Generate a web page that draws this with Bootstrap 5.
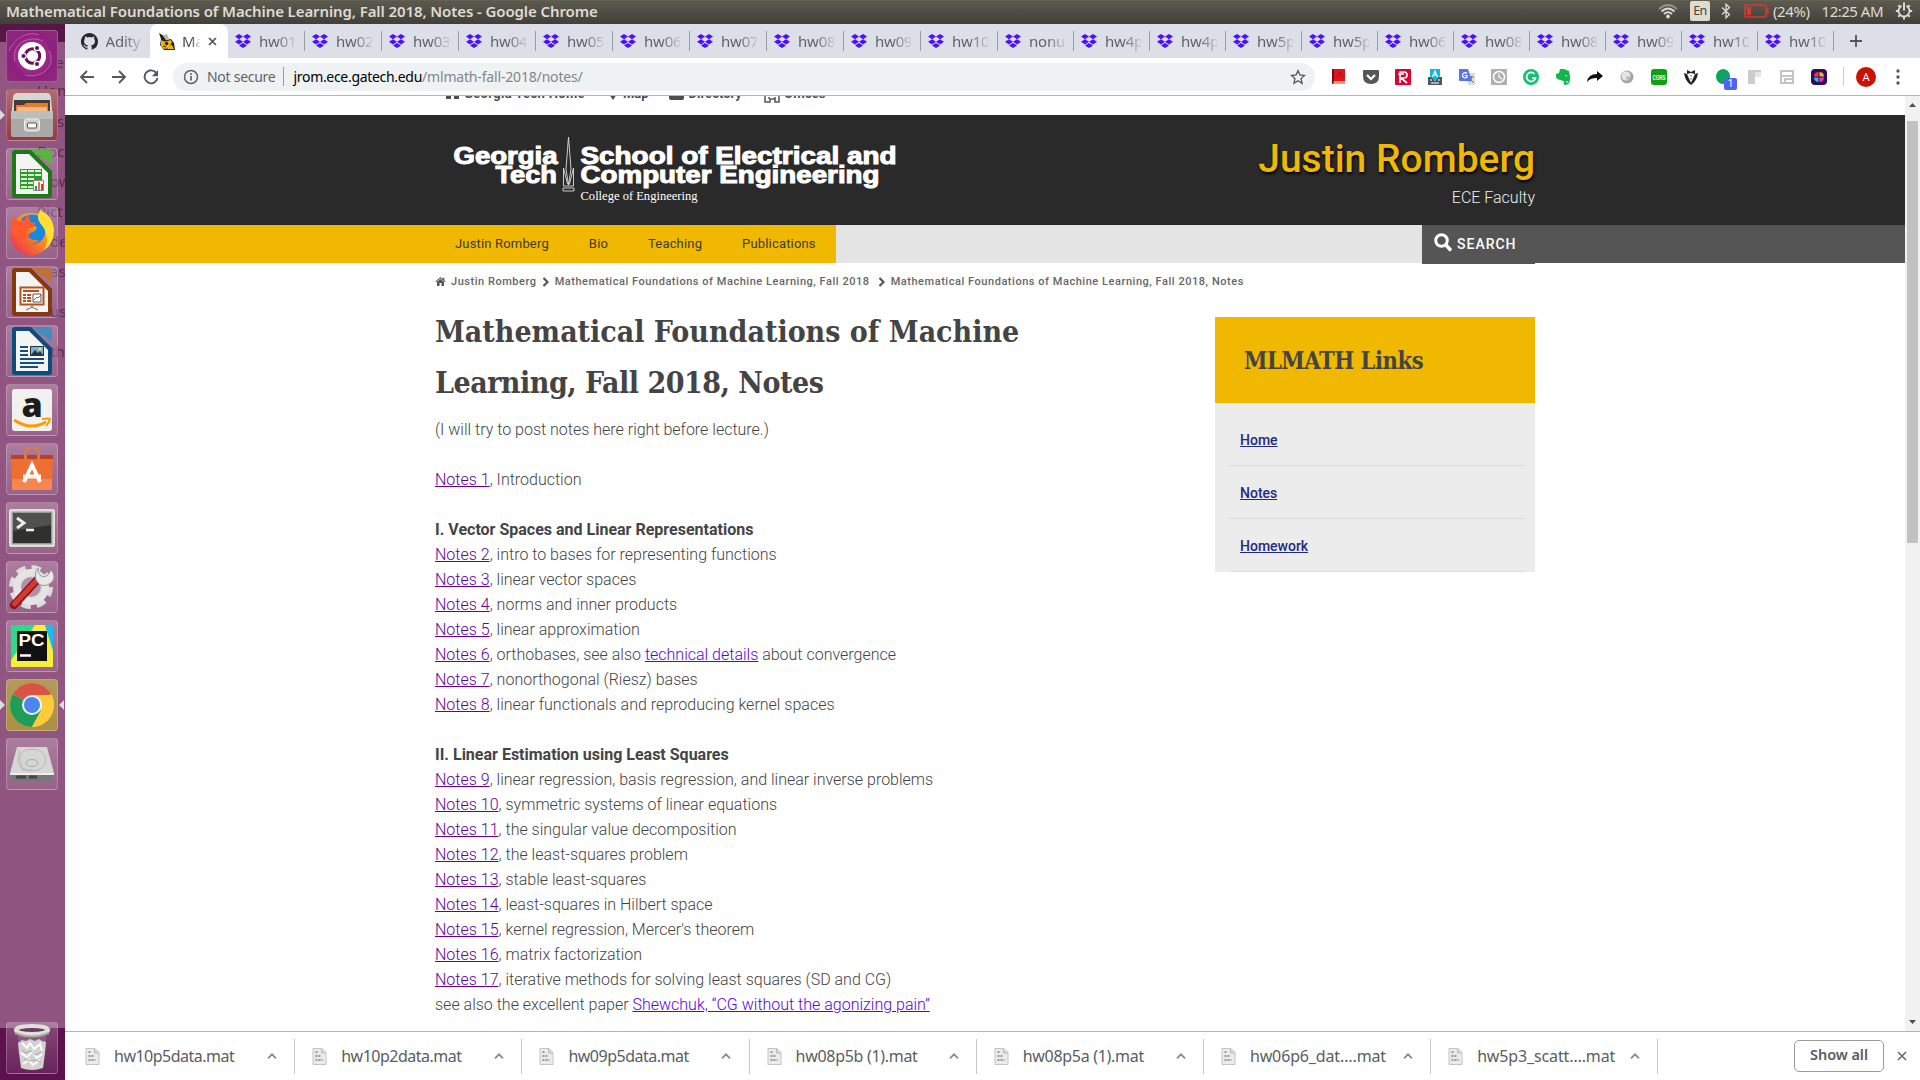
<!DOCTYPE html>
<html lang="en">
<head>
<meta charset="utf-8">
<title>Mathematical Foundations of Machine Learning, Fall 2018, Notes</title>
<link rel="stylesheet" href="https://cdn.jsdelivr.net/npm/bootstrap@5.3.0/dist/css/bootstrap.min.css">
<style>
:root{--gold:#f0b800;--ui:"Noto Sans","Open Sans",sans-serif;--slab:"DejaVu Serif Condensed","DejaVu Serif",serif}
body{width:1920px;height:1080px;overflow:hidden;font-family:Roboto,sans-serif;background:#fff}
svg{display:block;flex:none}
.desk-bar{height:24px;background:linear-gradient(#5c5a50,#403f39);color:#dfdbd2;font:15px/20px var(--ui);padding:0 7px 3px 6px;border-top:1px solid #63614f}
.desk-title{font-weight:600;font-size:15px;letter-spacing:-.1px;white-space:nowrap}
.en-box{width:20px;height:20px;background:#dfdbd2;color:#45443d;border-radius:2px;font-size:12.5px;letter-spacing:-.6px;line-height:20px;text-align:center}
.dock{width:65px;background:linear-gradient(#561747 0 18px,#915581 18px 1004px,#5d114e 1004px);padding:6px 7px 6px 6px;position:relative;overflow:hidden}
.dock-tile{width:52px;height:52px;border-radius:4px;background:linear-gradient(rgba(255,255,255,.24),rgba(255,255,255,.08));border:1px solid rgba(255,255,255,.22);margin-bottom:7px;position:relative;display:flex;align-items:center;justify-content:center}
.dock-tile.is-dash{background:radial-gradient(circle,#b04a9a,#8f1f7e 60%,#8c2a7b)}
.dock-tile.is-files{background:linear-gradient(#b06a72,#923b46)}
.dock-tile.is-chrome{background:linear-gradient(#b39a5c,#ac8f45)}
.ghost{position:absolute;font:15px/20px var(--ui);color:#5d2b52}
.pip{position:absolute;top:20px;width:0;height:0;border:5px solid transparent}
.pip-l{left:-7px;border-left-color:#ddd;border-right:0}
.pip-r{right:-7px;border-right-color:#ddd;border-left:0}
.tabs{height:34px;background:#dcdfe7;font:15px/34px var(--ui);color:#606368}
.tab{width:77px;padding-left:6.5px;position:relative;display:flex;align-items:center}
.tab.slim{width:76px}
.tab::after{content:"";position:absolute;right:0;top:7px;height:20px;width:1px;background:#9a9da3}
.tab.first::after,.tab.on::after{display:none}
.tab.first{width:85px;padding-left:16px}
.tab.on{width:78px;background:#fff;border-radius:8px 8px 0 0;padding-left:9px;color:#45484c}
.tab-t{margin-left:8.5px;width:36px;overflow:hidden;white-space:nowrap;letter-spacing:-.2px;-webkit-mask:linear-gradient(90deg,#000 50%,rgba(0,0,0,.15));mask:linear-gradient(90deg,#000 50%,rgba(0,0,0,.15))}
.tab.first .tab-t{margin-left:7.5px}
.tab.on .tab-t{width:18px;margin-left:7px}
.toolbar{height:38px;border-bottom:1px solid #b3b5b6;padding-left:14px;background:#fff}
.omni{margin-left:14px;width:1142px;height:28px;border-radius:14px;background:#eef2f3;padding:0 9px 0 10px;font:14px/28px var(--ui);color:#5f6368}
.url-host{letter-spacing:-.31px;color:#000}
.url-path{letter-spacing:-.17px;color:#80868b}
.ext{width:32px;height:24px;display:flex;align-items:center;justify-content:center}
.viewport{height:935px;overflow:hidden}
.page{width:1840px}
.inner{width:1100px;margin:0 auto}
.topline{height:19px;overflow:hidden;color:#4d4d4d;font:700 13px/16px Roboto,sans-serif}
.topline .inner{margin-top:-10px;padding-left:11px}
.brandbar{height:110px;background:#2a2a2a}
.who{font-weight:500;font-size:39px;line-height:46px;color:var(--gold);text-shadow:1px 2px 3px #000;margin-top:21px}
.sub{font-weight:300;font-size:16px;line-height:20px;color:#eee;margin-top:6px}
.menubar{height:38px;background:linear-gradient(90deg,var(--gold) 0 771px,#e4e4e4 771px 1357px,#555 1357px)}
.menubar a{color:#3d3a33;font-size:13px;letter-spacing:.17px;line-height:38px;padding:0 20px;text-decoration:none}
.find{width:113px;height:39px;background:#555;color:#fff;font:500 14px/38px Roboto;letter-spacing:1px}
.crumbs{height:54px;padding-top:10px;font:500 11px/18px Roboto;letter-spacing:.54px;color:#666}
h1{font:700 30px/51px var(--slab);color:#444;margin:-11px 0 9px;white-space:nowrap}
.h-one{letter-spacing:-.01px}
.h-two{letter-spacing:-.5px}
.notes{font-weight:300;font-size:16px;line-height:25px;color:#444;white-space:nowrap}
.notes b{font-weight:700}
.notes a{color:#660099;text-decoration:underline}
.notes a.fresh{color:#5a00e6}
.side{width:320px}
.side-head{height:86px;background:var(--gold);padding:1px 29px 0;font:700 23.5px/86px var(--slab);color:#444;letter-spacing:-.47px}
.side-body{background:#ececec;height:169px;padding:10px 10px 0 15px}
.side-body a{display:block;height:53px;padding:17px 10px 0;border-bottom:1px solid #dcdcdc;font:500 14px/20px Roboto;color:#242a80;text-decoration:underline}
.sbar{width:15px;background:#f1f1f1}
.thumb{width:11px;height:422px;background:#c1c1c1}
.shelf{height:49px;border-top:1px solid #b3b5b6;padding-left:3px;background:#fff;font:16px/48px var(--ui);color:#5a5d62}
.dl{width:227.2px;padding-left:17px;height:35px;line-height:35px;border-right:1px solid #c8c8c8;letter-spacing:-.5px}
.dl.paren{letter-spacing:-.3px}
.dl.cut{letter-spacing:-.14px}
.dl .nm{width:153px;margin-left:14px;padding-top:1px;white-space:nowrap}
.all{width:90px;height:32px;border:1px solid #9a9a9a;border-radius:5px;font:600 14.5px/27px var(--ui);text-align:center;letter-spacing:-.05px}
</style>
<script src="https://cdn.jsdelivr.net/npm/bootstrap@5.3.0/dist/js/bootstrap.bundle.min.js"></script>
</head>
<body class="d-flex flex-column">
<svg width="0" height="0" class="position-absolute">
<symbol id="dbx" viewBox="0 0 16 14"><path fill="#4a10ff" d="M4 0l4 2.6-4 2.6L0 2.6zM12 0l4 2.6-4 2.6-4-2.6zM4 5.2l4 2.6-4 2.6-4-2.6zM12 5.2l4 2.6-4 2.6-4-2.6zM8 8.9l4 2.6L8 14l-4-2.5z"/></symbol>
<symbol id="doc" viewBox="0 0 14 17"><path d="M.5.5h9l4 4v12H.5z" fill="#ebebeb" stroke="#c4c4c4"/><path d="M9 .5v4.500h4.500" fill="#d8d8d8" stroke="#bbb"/><path d="M3 4h2M3 8h2M6 8h2M3 12h2M6 12h2M9 12h1" stroke="#999" stroke-width="2"/></symbol>
<symbol id="up" viewBox="0 0 10 6"><path d="M1 5.300l4-4 4 4" fill="none" stroke="#85888c" stroke-width="1.700"/></symbol>
<symbol id="chev" viewBox="0 0 7 10"><path d="M1.500 1l4 4-4 4" fill="none" stroke="#555" stroke-width="2.200"/></symbol>
<symbol id="house" viewBox="0 0 16 14"><path d="M8 0l8 7-1 1-7-6-7 6-1-1zM11.500 1H14v4l-2.500-2zM8 3.200l5.500 4.700V14h-4V9.500h-3V14h-4V7.900z" fill="#555"/></symbol>
</svg>

<header class="desk-bar d-flex align-items-center justify-content-between">
  <span class="desk-title">Mathematical Foundations of Machine Learning, Fall 2018, Notes - Google Chrome</span>
  <div class="d-flex align-items-center">
    <svg width="20" height="16" viewBox="0 0 20 16" fill="none" stroke="#dfdbd2" stroke-width="1.800"><path d="M1 6Q10-2 19 6" opacity=".45"/><path d="M3.500 8.500Q10 2.500 16.500 8.500M6 11Q10 7.500 14 11"/><circle cx="10" cy="13.500" r="1" fill="#dfdbd2"/></svg>
    <div class="en-box" style="margin-left:12px">En</div>
    <svg style="margin-left:11px" width="10" height="16" viewBox="0 0 10 16"><path d="M1 4.500l7.500 7L5 14.800V1.200l3.500 3.300-7.500 7" fill="none" stroke="#dfdbd2" stroke-width="1.300"/></svg>
    <svg style="margin-left:13px" width="25" height="14" viewBox="0 0 25 14"><rect x="1" y="1" width="21" height="12" rx="1" fill="none" stroke="#e0352b" stroke-width="1.600"/><path d="M3 3h4v8H3zM23 4h1.500v6H23z" fill="#e0352b"/></svg>
    <span class="ms-1" style="letter-spacing:-.4px">(24%)</span>
    <span style="margin-left:12px;letter-spacing:-.5px">12:25 AM</span>
    <svg style="margin-left:12px" width="18" height="18" viewBox="0 0 18 18" fill="none" stroke="#dfdbd2"><circle cx="9" cy="9" r="5.500" stroke-width="1.800"/><path d="M9 1v8" stroke="#4c4b44" stroke-width="4.500"/><path d="M9 .5v8M3.300 3.300l2 2M14.700 3.300l-2 2M.8 9H4M17.200 9H14M3.300 14.700l2-2M14.700 14.700l-2-2M9 14v3.500" stroke-width="2"/></svg>
  </div>
</header>

<div class="d-flex flex-grow-1">
<nav class="dock d-flex flex-column flex-shrink-0">
  <span class="ghost" style="left:48px;top:28px">ce</span><span class="ghost" style="left:37px;top:56px">Hom</span>
  <span class="ghost" style="left:57px;top:87px">s</span><span class="ghost" style="left:37px;top:117px">Doc</span>
  <span class="ghost" style="left:50px;top:147px">ow</span><span class="ghost" style="left:37px;top:177px">Pict</span>
  <span class="ghost" style="left:50px;top:207px">de</span><span class="ghost" style="left:50px;top:237px">as</span>
  <span class="ghost" style="left:50px;top:277px">us</span><span class="ghost" style="left:50px;top:317px">th</span>
  <div class="dock-tile is-dash"><svg width="50" height="50" viewBox="0 0 50 50"><g fill="none" stroke="#d089c2" opacity=".6"><path d="M8 30C4 12 22 4 36 10M42 20C50 36 34 48 18 44M2 20C8 6 22 0 32 4"/></g><circle cx="25" cy="25" r="14" fill="#fff"/><circle cx="25.500" cy="25" r="7.200" fill="none" stroke="#6b1459" stroke-width="3"/><g fill="#6b1459" stroke="#fff" stroke-width="1.200"><circle cx="16.500" cy="25" r="2.700"/><circle cx="30" cy="17" r="2.700"/><circle cx="30" cy="33" r="2.700"/></g></svg></div>
  <div class="dock-tile is-files"><span class="pip pip-l"></span><svg width="44" height="46" viewBox="0 0 44 46"><path d="M3 5q1-4 4-4h30q3 0 4 4l1 13v25q0 2-2 2H4q-2 0-2-2V18z" fill="#d6d6d3"/><path d="M4 8h36v12H4z" fill="#443c36"/><path d="M6 13h8l2-2h22v10H6z" fill="#e8792a"/><path d="M7 15h30v6H7z" fill="#f3b884"/><path d="M1 19h42v24q0 2-2 2H3q-2 0-2-2z" fill="#a9a9a7"/><path d="M1 19h42v8H1z" fill="#bdbdbb"/><rect x="14.500" y="27" width="15" height="12" rx="2" fill="#cfcfcc" stroke="#eee"/><rect x="17.500" y="31" width="9" height="5" rx="1" fill="#fff" stroke="#555"/></svg></div>
  <div class="dock-tile"><svg width="42" height="48" viewBox="0 0 42 48"><path d="M4 0h16l21 21v24q0 3-3 3H4q-3 0-3-3V3q0-3 3-3z" fill="#1c7a18"/><path d="M20 0h18q3 0 3 3v12z" fill="#54b83c"/><path d="M5 4h13l19 19v21H5z" fill="#f4f4f2"/><rect x="9" y="19" width="22" height="20" fill="#2e9b28"/><path d="M10 20h6v2h-6zM17 20h6v2h-6zM24 20h6v2h-6zM10 24h6v2h-6zM17 24h6v2h-6zM24 24h6v2h-6zM10 28h6v2h-6zM17 28h6v2h-6zM10 32h6v2h-6zM17 32h6v2h-6zM10 36h6v2h-6zM17 36h6v2h-6z" fill="#d9f2d4"/><path d="M22.500 30.500h10v10h-10z" fill="#fff" stroke="#888"/><path d="M24 36h2v4h-2z" fill="#2b7cc0"/><path d="M27 32h2v8h-2z" fill="#e07a1f"/><path d="M30 34h2v6h-2z" fill="#d23c2c"/></svg></div>
  <div class="dock-tile"><svg width="46" height="46" viewBox="0 0 46 46"><defs><linearGradient id="fx" x1="1" y1="0" x2="0" y2="1"><stop offset="0" stop-color="#ffe43c"/><stop offset=".45" stop-color="#ff8a1e"/><stop offset="1" stop-color="#e8205c"/></linearGradient></defs><circle cx="22" cy="24" r="21" fill="url(#fx)"/><path d="M12 9q8-7 18-3 4 5 6 12 1 8-3 12-5 5-12 4 6 0 9-4-5 1-8-1-5-3-1-6l5-2 2-4-4-1q-4-3-3-6-4 1-5 4z" fill="#1787e0"/><path d="M2 15q1-6 4-9l3 6q3-2 7-2 0-3 4-6-1 6 2 8l5 1-3 4-5 2q-3 4 1 7l-9 6z" fill="#ff5a2e"/><path d="M31 0q13 6 14 20 0 14-10 20 5-8 2-17-2-6-6-10-4-6 0-13z" fill="#ffdf35"/></svg></div>
  <div class="dock-tile"><svg width="42" height="48" viewBox="0 0 42 48"><path d="M4 0h16l21 21v24q0 3-3 3H4q-3 0-3-3V3q0-3 3-3z" fill="#843a0e"/><path d="M20 0h18q3 0 3 3v12z" fill="#c2703a"/><path d="M5 4h13l19 19v21H5z" fill="#f4f4f2"/><rect x="9.500" y="19.500" width="23" height="17" fill="#fff" stroke="#b8501c" stroke-width="2"/><path d="M12 23h16M12 27h3M12 30h3M12 33h3M16 27h4M16 30h4M16 33h4" stroke="#c24a16" stroke-width="2"/><path d="M22 26h8v8h-8z" fill="#fff" stroke="#555"/><path d="M23 32l3-3 1 1 3-3" stroke="#3a9b2a" fill="none"/><path d="M21 37v2l-6 3M21 39l6 3" stroke="#666" fill="none"/></svg></div>
  <div class="dock-tile"><svg width="42" height="48" viewBox="0 0 42 48"><path d="M4 0h16l21 21v24q0 3-3 3H4q-3 0-3-3V3q0-3 3-3z" fill="#0d4d7c"/><path d="M20 0h18q3 0 3 3v12z" fill="#3f8fc0"/><path d="M5 4h13l19 19v21H5z" fill="#f4f4f2"/><path d="M9 20h8M9 24h8M9 28h8M9 32h24M9 36h24M9 40h18" stroke="#14507e" stroke-width="2"/><rect x="19.500" y="19.500" width="13" height="9" fill="#6fb4e2" stroke="#333"/><path d="M20 28l4-5 3 3 2-2 3 4z" fill="#333"/><circle cx="29" cy="22" r="1.500" fill="#ffe04a"/></svg></div>
  <div class="dock-tile"><svg width="42" height="44" viewBox="0 0 42 44"><rect x="1" y="1" width="40" height="42" rx="3" fill="#f1f1ef"/><text x="21" y="29" text-anchor="middle" font-family="Open Sans" font-weight="800" font-size="34" fill="#1c1c1c">a</text><path d="M3 32q17 11 32 2" fill="none" stroke="#ff9900" stroke-width="3"/><path d="M31 31q6-1 8 0-1 4-4 7" fill="none" stroke="#ff9900" stroke-width="2"/></svg></div>
  <div class="dock-tile"><svg width="44" height="44" viewBox="0 0 44 44"><path d="M1 8h42l-1 35H2z" fill="#ee6f33"/><path d="M1 8h42v4H1z" fill="#b9431b"/><path d="M2 32h40v11H2z" fill="#f58650"/><path d="M15.500 14V5q1-4 3-4h7q2 0 3 4v9" fill="none" stroke="#dd7452" stroke-width="3"/><path d="M14 35l8-17 8 17M13 29.500h18" fill="none" stroke="#fff" stroke-width="3.800"/></svg></div>
  <div class="dock-tile"><svg width="46" height="38" viewBox="0 0 46 38"><rect width="46" height="38" rx="2" fill="#deded9"/><rect x="2.500" y="2.500" width="41" height="33" fill="#999"/><rect x="4" y="4" width="38" height="30" fill="#30302e"/><path d="M4 4h38v12L4 22z" fill="#50504c"/><path d="M8 9l7 5-7 5" fill="none" stroke="#eee" stroke-width="2.800"/><path d="M17 21h8" stroke="#eee" stroke-width="2.600"/></svg></div>
  <div class="dock-tile"><svg width="46" height="46" viewBox="0 0 46 46"><circle cx="22" cy="23" r="19" fill="none" stroke="#dcdcda" stroke-width="6" stroke-dasharray="9 5.920"/><circle cx="22" cy="23" r="14" fill="#b58fa8" stroke="#e4e4e2" stroke-width="8"/><circle cx="22" cy="23" r="10" fill="none" stroke="#bbb"/><path d="M5 41L29 15" stroke="#8c1414" stroke-width="8" stroke-linecap="round"/><path d="M5.500 40L28 16" stroke="#d23a34" stroke-width="5" stroke-linecap="round"/><path d="M29 4q-1 5 3 8 4 2 7-1l3-5q6 7 0 13-5 4-11 2l-4-5q-2-8 2-12z" fill="#e8e8e6" stroke="#999"/></svg></div>
  <div class="dock-tile"><svg width="44" height="44" viewBox="0 0 44 44"><defs><linearGradient id="pc"><stop offset="0" stop-color="#2bd98a"/><stop offset="1" stop-color="#1bbce8"/></linearGradient></defs><path d="M1 1h42v42H1z" fill="url(#pc)"/><path d="M23 1h12l8 22v20H1V36z" fill="#f4f03a"/><path d="M1 1h24L1 36z" fill="#2bdb8b"/><path d="M35 1h8v26z" fill="#17c0e8"/><rect x="7" y="7" width="30" height="30" fill="#111"/><text x="8.500" y="22" font-family="Liberation Sans" font-weight="700" font-size="17" fill="#fff" textLength="26" lengthAdjust="spacingAndGlyphs">PC</text><path d="M10 31.500h11" stroke="#fff" stroke-width="2.500"/></svg></div>
  <div class="dock-tile is-chrome"><span class="pip pip-l"></span><span class="pip pip-r"></span><svg width="44" height="44" viewBox="0 0 44 44"><circle cx="22" cy="22" r="22" fill="#fc3"/><path d="M22 22L2.950 11A22 22 0 0 1 41.050 11z" fill="#da5347"/><path d="M22 22L2.950 11A22 22 0 0 0 22 44L31.500 27.500z" fill="#1f9d58"/><path d="M22 12h19.500A22 22 0 0 1 22 44l9-17z" fill="#fdcb3c"/><circle cx="22" cy="22" r="10" fill="#f5f5f5"/><circle cx="22" cy="22" r="8" fill="#4a86ec"/></svg></div>
  <div class="dock-tile"><svg width="46" height="36" viewBox="0 0 46 36"><path d="M8 1h30l7 26H1z" fill="#d6d6d4"/><path d="M1 27h44v6q0 2-2 2H3q-2 0-2-2z" fill="#777"/><path d="M1 27h44v2H1z" fill="#eee"/><path d="M7 31h10M20 31h8" stroke="#444" stroke-width="3"/><ellipse cx="23" cy="14" rx="14" ry="11" fill="none" stroke="#b5b5b3"/><ellipse cx="23" cy="17" rx="6" ry="3.500" fill="none" stroke="#aaa"/><path d="M10 4l3 20h10" fill="none" stroke="#bbb"/></svg></div>
  <div class="dock-tile mt-auto mb-0"><svg width="38" height="50" viewBox="0 0 38 50"><path d="M4 7h30l-4 37q-11 4-22 0z" fill="rgba(255,255,255,.14)"/><path d="M5 20l4-3 4 1 4-2 5 2 4-2 3 2 4 1-1 11-2 15q-11 4-22 0l-2-15z" fill="#d2d2cf"/><path d="M9 20l5 5 3-5 4 6 6-5 2 7M8 30l6 4 5-5 5 6 5-4M10 41l6-4 4 5 7-5" stroke="#fff" stroke-width="2" fill="none"/><path d="M9 27l4 3 5-2 4 4 6-3M11 36l6 2 5-1 6 2" stroke="#aaa" fill="none"/><ellipse cx="19" cy="7" rx="16" ry="4" fill="#6e3a63" stroke="#e1e1dc" stroke-width="4"/><path d="M2 10q17 7 34 0" fill="none" stroke="#a9a9a2" stroke-width="2"/></svg></div>
</nav>

<main class="flex-grow-1 d-flex flex-column">
  <div class="tabs d-flex">
    <div class="tab first"><svg width="17" height="17" viewBox="0 0 16 16"><path fill="#24292e" d="M8 0C3.580 0 0 3.580 0 8c0 3.540 2.290 6.530 5.470 7.590.4.070.55-.17.55-.38v-1.490c-2.010.37-2.530-.49-2.690-.94-.09-.23-.48-.94-.82-1.130-.28-.15-.68-.52-.01-.53.63-.01 1.080.58 1.230.82.72 1.210 1.870.87 2.330.66.07-.52.28-.87.51-1.070-1.780-.2-3.640-.89-3.640-3.950 0-.87.31-1.590.82-2.150-.08-.2-.36-1.020.08-2.120 0 0 .67-.21 2.200.82a7.600 7.600 0 0 1 4 0c1.530-1.040 2.200-.82 2.200-.82.44 1.100.16 1.920.08 2.120.51.56.82 1.270.82 2.150 0 3.070-1.870 3.750-3.650 3.950.29.25.54.73.54 1.480v2.200c0 .21.15.46.55.38A8 8 0 0 0 16 8c0-4.420-3.580-8-8-8z"/></svg><span class="tab-t">Adity</span></div>
    <div class="tab on"><svg width="16" height="17" viewBox="0 0 16 17"><path d="M0 0l5 3 2 4 5-1 3 4 1 7H5l-4-5 1-6z" fill="#26231a"/><path d="M2 7l4 2v4l-4-1zM8 8l4-1 1 3-4 2zM8 13l5-1 2 4H9z" fill="#f2b400"/><path d="M2 10l5-2 5 2-1 5-6 1-3-3z" fill="#f2b400"/><path d="M7 9l2 1-1 2-2-1zM4 13l3 1" stroke="#26231a" fill="#26231a"/><path d="M4 3l4-2 2 5-3 1z" fill="#b9b6ad"/></svg><span class="tab-t">Ma</span><svg class="ms-2" width="9" height="9" viewBox="0 0 9 9"><path d="M1 1l7 7M8 1L1 8" stroke="#505357" stroke-width="1.700"/></svg></div>
    <div class="tab"><svg width="16" height="14"><use href="#dbx"/></svg><span class="tab-t">hw01</span></div>
    <div class="tab"><svg width="16" height="14"><use href="#dbx"/></svg><span class="tab-t">hw02</span></div>
    <div class="tab"><svg width="16" height="14"><use href="#dbx"/></svg><span class="tab-t">hw03</span></div>
    <div class="tab"><svg width="16" height="14"><use href="#dbx"/></svg><span class="tab-t">hw04</span></div>
    <div class="tab"><svg width="16" height="14"><use href="#dbx"/></svg><span class="tab-t">hw05</span></div>
    <div class="tab"><svg width="16" height="14"><use href="#dbx"/></svg><span class="tab-t">hw06</span></div>
    <div class="tab"><svg width="16" height="14"><use href="#dbx"/></svg><span class="tab-t">hw07</span></div>
    <div class="tab"><svg width="16" height="14"><use href="#dbx"/></svg><span class="tab-t">hw08</span></div>
    <div class="tab"><svg width="16" height="14"><use href="#dbx"/></svg><span class="tab-t">hw09</span></div>
    <div class="tab"><svg width="16" height="14"><use href="#dbx"/></svg><span class="tab-t">hw10</span></div>
    <div class="tab slim"><svg width="16" height="14"><use href="#dbx"/></svg><span class="tab-t">nonu</span></div>
    <div class="tab slim"><svg width="16" height="14"><use href="#dbx"/></svg><span class="tab-t">hw4p</span></div>
    <div class="tab slim"><svg width="16" height="14"><use href="#dbx"/></svg><span class="tab-t">hw4p</span></div>
    <div class="tab slim"><svg width="16" height="14"><use href="#dbx"/></svg><span class="tab-t">hw5p</span></div>
    <div class="tab slim"><svg width="16" height="14"><use href="#dbx"/></svg><span class="tab-t">hw5p</span></div>
    <div class="tab slim"><svg width="16" height="14"><use href="#dbx"/></svg><span class="tab-t">hw06</span></div>
    <div class="tab slim"><svg width="16" height="14"><use href="#dbx"/></svg><span class="tab-t">hw08</span></div>
    <div class="tab slim"><svg width="16" height="14"><use href="#dbx"/></svg><span class="tab-t">hw08</span></div>
    <div class="tab slim"><svg width="16" height="14"><use href="#dbx"/></svg><span class="tab-t">hw09</span></div>
    <div class="tab slim"><svg width="16" height="14"><use href="#dbx"/></svg><span class="tab-t">hw10</span></div>
    <div class="tab slim"><svg width="16" height="14"><use href="#dbx"/></svg><span class="tab-t">hw10</span></div>
    <svg class="align-self-center" style="margin-left:16px" width="12" height="12"><path d="M6 0v12M0 6h12" stroke="#505357" stroke-width="1.800"/></svg>
  </div>

  <div class="toolbar d-flex align-items-center">
    <svg width="16" height="14" viewBox="0 0 16 14" fill="none" stroke="#55585c" stroke-width="1.900"><path d="M15 7H2M8 1L2 7l6 6"/></svg>
    <svg style="margin-left:16px" width="16" height="14" viewBox="0 0 16 14" fill="none" stroke="#55585c" stroke-width="1.900"><path d="M1 7h13M8 1l6 6-6 6"/></svg>
    <svg style="margin-left:16px" width="16" height="16" viewBox="0 0 16 16"><path d="M13.500 4.200A6.500 6.500 0 1 0 14.500 9" fill="none" stroke="#55585c" stroke-width="1.900"/><path d="M15 1v6.200H8.800z" fill="#55585c"/></svg>
    <div class="omni d-flex align-items-center">
      <svg width="16" height="16" viewBox="0 0 16 16"><circle cx="8" cy="8" r="6.500" fill="none" stroke="#5f6368" stroke-width="1.500"/><path d="M8 7v4.500M8 4.200v1.700" stroke="#5f6368" stroke-width="1.700"/></svg>
      <span style="margin-left:8px;letter-spacing:-.27px">Not secure</span>
      <span style="width:1px;height:19px;background:#9a9da0;margin:0 9px 0 8px"></span>
      <span class="text-nowrap"><span class="url-host">jrom.ece.gatech.edu</span><span class="url-path">/mlmath-fall-2018/notes/</span></span>
      <svg class="ms-auto" width="16" height="16" viewBox="0 0 24 24"><path d="M12 2.500l2.900 6.500 7 .7-5.300 4.700 1.500 7L12 17.700l-6.100 3.700 1.500-7-5.300-4.700 7-.7z" fill="none" stroke="#55585c" stroke-width="2"/></svg>
    </div>
    <div class="d-flex" style="margin-left:8px">
      <div class="ext"><svg width="16" height="16"><path d="M1 0h13v12H1z" fill="#e0141c"/><path d="M1 0h2v15H1z" fill="#7c0a10"/><path d="M3 12h11v3H2z" fill="#d9a184"/><path d="M6 9l3-6 3 6" stroke="#b00f16" fill="none"/></svg></div>
      <div class="ext"><svg width="16" height="14"><path d="M1 0h14q1 0 1 1v5q0 8-8 8T0 6V1q0-1 1-1z" fill="#54565a"/><path d="M4 5l4 4 4-4" fill="none" stroke="#fff" stroke-width="2.200"/></svg></div>
      <div class="ext"><svg width="16" height="16"><rect width="16" height="16" rx="1" fill="#df0034"/><path d="M5 14V3h4q3 0 3 3t-3 3H6l6 5M3 5h6" fill="none" stroke="#fff" stroke-width="1.700"/></svg></div>
      <div class="ext"><svg width="16" height="16"><path d="M1 8h14v8H1z" fill="#4a545c"/><path d="M3 11h2M7 11h2M11 11h2M4 14h8" stroke="#c9d1d6" stroke-width="1.300"/><path d="M3 0h10v7l-5 5-5-5z" fill="#10b8dc"/><path d="M5.500 8L8 2l2.500 6M6.500 6h3" fill="none" stroke="#fff" stroke-width="1.200"/></svg></div>
      <div class="ext"><svg width="16" height="16"><path d="M6 4h10v12H9z" fill="#dadce0"/><path d="M0 0h9l4 12H1q-1 0-1-1z" fill="#5a74e8"/><path d="M8 4.500A2.600 2.600 0 1 0 8 8V6.500H5.700" fill="none" stroke="#fff" stroke-width="1.200"/><path d="M10 8h5M12.500 7v1q0 3-2 5M11 10l4 4" stroke="#6c7a89" fill="none"/></svg></div>
      <div class="ext"><svg width="16" height="16"><rect width="16" height="16" fill="#b0b0b0"/><circle cx="8" cy="8" r="5.500" fill="none" stroke="#fff" stroke-width="1.500"/><path d="M8 4.500V8l3 2" fill="none" stroke="#fff" stroke-width="1.200"/></svg></div>
      <div class="ext"><svg width="16" height="16"><circle cx="8" cy="8" r="8" fill="#12c274"/><path d="M11.500 5A4.500 4.500 0 1 0 12.500 9H9" fill="none" stroke="#fff" stroke-width="1.700"/></svg></div>
      <div class="ext"><svg width="16" height="16"><path d="M5 0h4l5 2q2 8 0 12-1 2-4 2-2-1-1-4-2 0-3-1-4 0-5-3V5l3-1z" fill="#10b84a"/><path d="M10 6.500q2-.5 2 1" stroke="#fff" fill="none"/><path d="M11 13h2" stroke="#fff"/></svg></div>
      <div class="ext"><svg width="16" height="12"><path d="M10 0l6 5-6 5V7Q3 7 0 11 1 3 10 3z" fill="#111"/></svg></div>
      <div class="ext"><svg width="14" height="14"><circle cx="7" cy="7" r="6.500" fill="#a5a5a5"/><circle cx="6" cy="6" r="4.500" fill="#e6e6e6"/><circle cx="8" cy="8" r="2" fill="#bbb"/></svg></div>
      <div class="ext"><svg width="16" height="16"><rect width="16" height="16" rx="3" fill="#12a012"/><text x="8" y="11" text-anchor="middle" font-family="Liberation Sans" font-weight="700" font-size="7" fill="#fff" textLength="13" lengthAdjust="spacingAndGlyphs">CORS</text></svg></div>
      <div class="ext"><svg width="16" height="16"><path d="M4 1l4 2 4-2v4L8 4 4 5zM1 4l3 1 4 9v2Q2 12 1 4zM15 4l-3 1-4 9v2q6-4 7-12z" fill="#222"/><path d="M8 6v9" stroke="#555" stroke-dasharray="1.500 1.500"/></svg></div>
      <div class="ext position-relative"><svg width="16" height="16"><path d="M8 0a7 7 0 0 1 7 7v8H9A7.500 7.500 0 0 1 8 0z" fill="#0aa65a"/></svg><span class="position-absolute text-white text-center" style="left:17px;top:13px;width:13px;height:12px;background:#5361f2;border-radius:2px;font:10px/12px Roboto">1</span></div>
      <div class="ext"><svg width="16" height="14"><path d="M1 0h13v7H8v7H1z" fill="#ccc"/><path d="M8 7h6V2H8z" fill="#e4e4e4"/></svg></div>
      <div class="ext"><svg width="14" height="14"><path d="M1 1h12v12H1zM1 6h12M5 13V9h8" fill="none" stroke="#c4c4c4" stroke-width="2"/></svg></div>
      <div class="ext"><svg width="16" height="16"><rect width="16" height="16" rx="4" fill="#330a5c"/><path d="M7.500 3v4.500H3A4.500 4.500 0 0 1 7.500 3z" fill="#ef3b4c"/><path d="M8.500 3A4.500 4.500 0 0 1 13 7.500H8.500z" fill="#ffb22e"/><path d="M3 8.500h4.500V13A4.500 4.500 0 0 1 3 8.500z" fill="#21c7e0"/><path d="M8.500 8.500H13A4.500 4.500 0 0 1 8.500 13z" fill="#e43fb5"/></svg></div>
    </div>
    <span style="width:1px;height:19px;background:#ccc;margin-left:8px"></span>
    <svg style="margin-left:12px" width="20" height="20"><circle cx="10" cy="10" r="10" fill="#cc1100"/><text x="10" y="14" text-anchor="middle" font-family="Roboto" font-size="11" fill="#fff">A</text></svg>
    <svg style="margin-left:20px" width="4" height="16" fill="#55585c"><circle cx="2" cy="2" r="1.700"/><circle cx="2" cy="8" r="1.700"/><circle cx="2" cy="14" r="1.700"/></svg>
  </div>

  <div class="viewport d-flex">
    <div class="page">
      <div class="topline"><div class="inner d-flex">
        <svg style="margin-top:-1px" width="13" height="14"><path d="M0 0h13v14H8V9H5v5H0z" fill="#4d4d4d"/></svg><span style="margin-left:5px;letter-spacing:.34px">Georgia Tech Home</span>
        <svg style="margin:-1px 0 0 23px" width="10" height="15"><path d="M0 4a5 5 0 0 1 10 0q0 4-5 11Q0 8 0 4z" fill="#4d4d4d"/></svg><span style="margin-left:5px">Map</span>
        <svg style="margin-left:20px" width="15" height="14"><rect width="15" height="14" rx="2" fill="#4d4d4d"/></svg><span style="margin-left:5px">Directory</span>
        <svg style="margin-left:22px" width="16" height="17"><path d="M1 1h14v15h-4v-3H6v3H1z" fill="#fff" stroke="#555" stroke-width="1.500"/><path d="M4 9h2M7 9h2M10 9h2M4 12h2M10 12h2" stroke="#555" stroke-width="1.500"/></svg><span style="margin-left:4px">Offices</span>
      </div></div>
      <div class="brandbar"><div class="inner d-flex justify-content-between">
        <svg style="margin:18px 0 0 16px" width="450" height="70" fill="#fff" font-family="Liberation Sans" font-weight="700" font-size="23">
          <g stroke="#fff" stroke-width="1"><text x="2.500" y="30.500" textLength="104" lengthAdjust="spacingAndGlyphs">Georgia</text>
          <text x="44.500" y="49.500" textLength="61.500" lengthAdjust="spacingAndGlyphs">Tech</text>
          <text x="129.500" y="30.500" textLength="316" lengthAdjust="spacingAndGlyphs">School of Electrical and</text>
          <text x="129.500" y="49.500" textLength="299" lengthAdjust="spacingAndGlyphs">Computer Engineering</text></g>
          <text x="129.500" y="66.500" font-family="Liberation Serif" font-weight="400" font-size="13.500" textLength="117" lengthAdjust="spacingAndGlyphs">College of Engineering</text>
          <g fill="none" stroke="#ddd" stroke-width=".9"><path d="M117.500 4l-2.500 32 2.500 16 2.500-16zM112.500 35v18h10V35l-4 16h-2zM112 55h11v3h-11z"/></g>
        </svg>
        <div class="text-end"><div class="who">Justin Romberg</div><div class="sub">ECE Faculty</div></div>
      </div></div>
      <div class="menubar"><div class="inner d-flex">
        <a href="#">Justin Romberg</a><a href="#">Bio</a><a href="#">Teaching</a><a href="#">Publications</a>
        <div class="find ms-auto d-flex"><svg style="margin:8px 5px 0 12px" width="18" height="19"><circle cx="7.500" cy="7.500" r="5.800" fill="none" stroke="#fff" stroke-width="3"/><path d="M12 12l5 5.500" stroke="#fff" stroke-width="3.400"/></svg><span>SEARCH</span></div>
      </div></div>
      <div class="inner crumbs d-flex text-nowrap">
        <svg style="margin-top:4px" width="11" height="9"><use href="#house"/></svg><span style="margin-left:5px">Justin Romberg</span>
        <svg style="margin:4px 6px 0 5px" width="7" height="10"><use href="#chev"/></svg><span>Mathematical Foundations of Machine Learning, Fall 2018</span>
        <svg style="margin:4px 6px 0 8px" width="7" height="10"><use href="#chev"/></svg><span>Mathematical Foundations of Machine Learning, Fall 2018, Notes</span>
      </div>
      <div class="inner d-flex justify-content-between align-items-start">
        <article>
          <h1><span class="h-one">Mathematical Foundations of Machine</span><br><span class="h-two">Learning, Fall 2018, Notes</span></h1>
          <div class="notes">
            (I will try to post notes here right before lecture.)<br><br>
            <a href="#">Notes 1</a>, Introduction<br><br>
            <b>I. Vector Spaces and Linear Representations</b><br>
            <a href="#">Notes 2</a>, intro to bases for representing functions<br>
            <a href="#">Notes 3</a>, linear vector spaces<br>
            <a href="#">Notes 4</a>, norms and inner products<br>
            <a href="#">Notes 5</a>, linear approximation<br>
            <a href="#">Notes 6</a>, orthobases, see also <a href="#" class="fresh">technical details</a> about convergence<br>
            <a href="#">Notes 7</a>, nonorthogonal (Riesz) bases<br>
            <a href="#">Notes 8</a>, linear functionals and reproducing kernel spaces<br><br>
            <b>II. Linear Estimation using Least Squares</b><br>
            <a href="#">Notes 9</a>, linear regression, basis regression, and linear inverse problems<br>
            <a href="#">Notes 10</a>, symmetric systems of linear equations<br>
            <a href="#">Notes 11</a>, the singular value decomposition<br>
            <a href="#">Notes 12</a>, the least-squares problem<br>
            <a href="#">Notes 13</a>, stable least-squares<br>
            <a href="#">Notes 14</a>, least-squares in Hilbert space<br>
            <a href="#">Notes 15</a>, kernel regression, Mercer's theorem<br>
            <a href="#">Notes 16</a>, matrix factorization<br>
            <a href="#">Notes 17</a>, iterative methods for solving least squares (SD and CG)<br>
            see also the excellent paper <a href="#" class="fresh">Shewchuk, “CG without the agonizing pain”</a>
          </div>
        </article>
        <aside class="side">
          <div class="side-head">MLMATH Links</div>
          <div class="side-body"><a href="#">Home</a><a href="#">Notes</a><a href="#">Homework</a></div>
        </aside>
      </div>
    </div>
    <div class="sbar d-flex flex-column align-items-center">
      <svg style="margin:6px 0 14px" width="7" height="5"><path d="M0 5l3.500-4L7 5z" fill="#505050"/></svg>
      <div class="thumb"></div>
      <svg class="mt-auto" style="margin-bottom:6px" width="7" height="5"><path d="M0 0h7L3.500 4z" fill="#505050"/></svg>
    </div>
  </div>

  <footer class="shelf d-flex align-items-center">
    <div class="dl d-flex align-items-center"><svg width="15" height="17"><use href="#doc"/></svg><span class="nm">hw10p5data.mat</span><svg width="10" height="6"><use href="#up"/></svg></div>
    <div class="dl d-flex align-items-center"><svg width="15" height="17"><use href="#doc"/></svg><span class="nm">hw10p2data.mat</span><svg width="10" height="6"><use href="#up"/></svg></div>
    <div class="dl d-flex align-items-center"><svg width="15" height="17"><use href="#doc"/></svg><span class="nm">hw09p5data.mat</span><svg width="10" height="6"><use href="#up"/></svg></div>
    <div class="dl paren d-flex align-items-center"><svg width="15" height="17"><use href="#doc"/></svg><span class="nm">hw08p5b (1).mat</span><svg width="10" height="6"><use href="#up"/></svg></div>
    <div class="dl paren d-flex align-items-center"><svg width="15" height="17"><use href="#doc"/></svg><span class="nm">hw08p5a (1).mat</span><svg width="10" height="6"><use href="#up"/></svg></div>
    <div class="dl cut d-flex align-items-center"><svg width="15" height="17"><use href="#doc"/></svg><span class="nm">hw06p6_dat….mat</span><svg width="10" height="6"><use href="#up"/></svg></div>
    <div class="dl cut d-flex align-items-center"><svg width="15" height="17"><use href="#doc"/></svg><span class="nm">hw5p3_scatt….mat</span><svg width="10" height="6"><use href="#up"/></svg></div>
    <div class="all ms-auto">Show all</div>
    <svg style="margin:0 13px 0 13px" width="10" height="10"><path d="M1 1l8 8M9 1L1 9" stroke="#6b6e72" stroke-width="1.700"/></svg>
  </footer>
</main>
</div>
</body>
</html>
